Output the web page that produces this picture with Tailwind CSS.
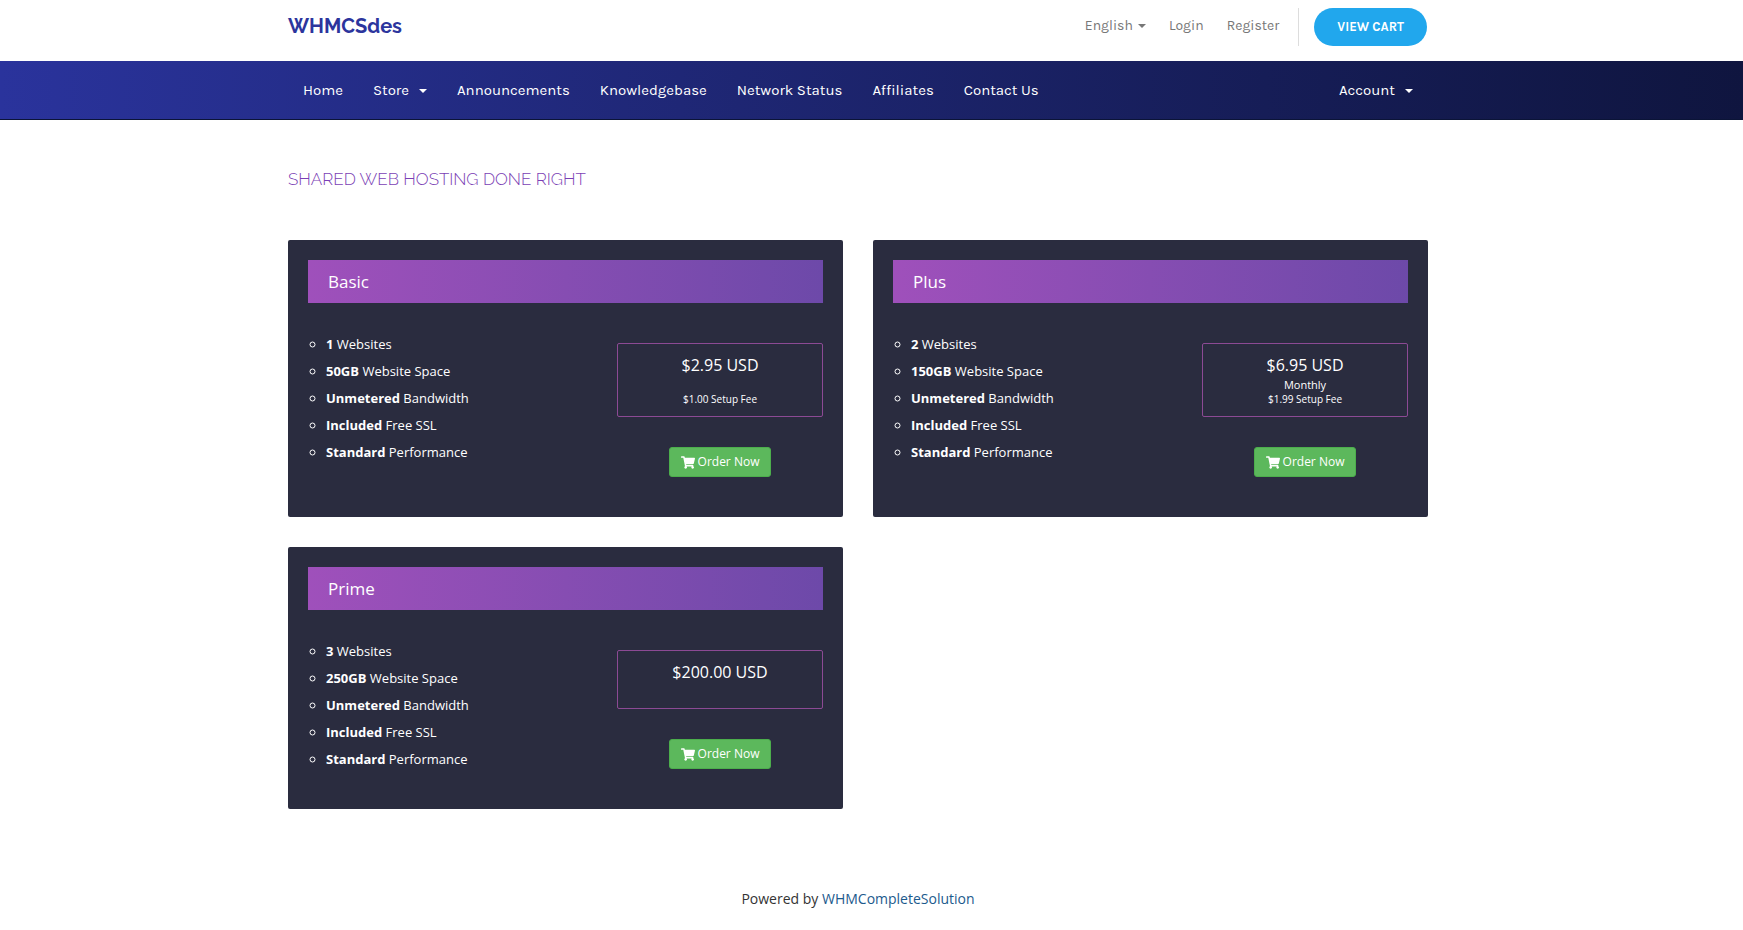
<!DOCTYPE html>
<html lang="en">
<head>
  <meta charset="UTF-8" />
  <meta name="viewport" content="width=device-width, initial-scale=1.0"/>
  <title>WHMCSdes - Shared Web Hosting</title>
  <script src="https://cdn.jsdelivr.net/npm/@tailwindcss/browser@4"></script>
</head>
<body class="bg-white font-['Open_Sans',sans-serif] text-sm text-[#333]">
  <svg class="hidden">
    <symbol id="cart" viewBox="0 0 576 512">
      <path fill="currentColor" d="M528.12 301.319l47.273-208C578.806 78.301 567.391 64 551.99 64H159.208l-9.166-44.81C147.758 8.021 137.93 0 126.529 0H24C10.745 0 0 10.745 0 24v16c0 13.255 10.745 24 24 24h69.883l70.248 343.435C147.325 417.1 136 435.222 136 456c0 30.928 25.072 56 56 56s56-25.072 56-56c0-15.674-6.447-29.835-16.824-40h209.647C430.447 426.165 424 440.326 424 456c0 30.928 25.072 56 56 56s56-25.072 56-56c0-22.172-12.888-41.332-31.579-50.405l5.517-24.276c3.413-15.018-8.002-29.319-23.403-29.319H218.117l-6.545-32h293.145c11.206 0 20.92-7.754 23.403-18.681z"/>
    </symbol>
  </svg>

  <!-- Header -->
  <header class="pr-[27px]">
    <div class="mx-auto flex max-w-[1140px] items-start justify-between pt-2 pb-[15px]">
      <a href="#" class="pt-1 font-[Raleway,Lato,sans-serif] text-[20px] leading-7 font-bold text-[#2c359d]">WHMCSdes</a>
      <div class="flex items-center pr-px font-[Karla,Roboto,sans-serif] text-[14px] text-[#777]">
        <div class="flex items-center gap-[23px] pr-[19px] pb-0.5">
          <button class="flex items-center gap-[5px]">English
            <span class="border-x-4 border-t-4 border-x-transparent border-t-current"></span>
          </button>
          <a href="#">Login</a>
          <a href="#">Register</a>
        </div>
        <div class="border-l border-[#ddd] pl-[15px]">
          <a href="#" class="flex h-[38px] items-center rounded-full bg-[#21a7ed] px-[23px] text-[13px] font-bold text-white">VIEW CART</a>
        </div>
      </div>
    </div>
  </header>

  <!-- Main menu -->
  <nav class="border-b border-[#0b1437] bg-linear-to-r from-[#2a339c] to-[#0f153f] pr-[27px] font-[Karla,Roboto,sans-serif] text-[15px] text-white">
    <div class="mx-auto flex h-[58px] max-w-[1140px] items-center justify-between px-[15px] pt-0.5">
      <div class="flex items-center gap-[30px]">
        <a href="#">Home</a>
        <button class="flex items-center gap-2.5">Store
          <span class="border-x-4 border-t-4 border-x-transparent border-t-current"></span>
        </button>
        <a href="#">Announcements</a>
        <a href="#">Knowledgebase</a>
        <a href="#">Network Status</a>
        <a href="#">Affiliates</a>
        <a href="#">Contact Us</a>
      </div>
      <button class="flex items-center gap-2.5">Account
        <span class="border-x-4 border-t-4 border-x-transparent border-t-current"></span>
      </button>
    </div>
  </nav>

  <!-- Plans -->
  <main class="pr-[27px]">
    <div class="mx-auto max-w-[1140px]">
      <h1 class="pt-[45px] pb-[47px] font-[Raleway,Lato,sans-serif] text-[17px] leading-7 font-light text-[#7b3fb5]">SHARED WEB HOSTING DONE RIGHT</h1>

      <div class="grid grid-cols-2 items-start gap-[30px] text-white">
        <section class="rounded-xs bg-[#2a2c3f] px-5 pt-5 pb-10">
          <h2 class="bg-linear-to-r from-[#9f50bb] to-[#6d49a9] px-5 py-2 text-[17px] leading-[27px]">Basic</h2>
          <div class="flex justify-between pt-8">
            <ul class="ml-[18px] list-[circle] space-y-2 text-[13px] leading-[19px]">
              <li><b>1</b> Websites</li>
              <li><b>50GB</b> Website Space</li>
              <li><b>Unmetered</b> Bandwidth</li>
              <li><b>Included</b> Free SSL</li>
              <li><b>Standard</b> Performance</li>
            </ul>
            <div class="mt-2 flex w-2/5 flex-col items-center gap-[30px]">
              <div class="w-full rounded-xs border border-[#8c4a94] py-[9px] text-center">
                <p class="text-[16px] leading-6">$2.95 USD</p>
                <p class="h-[15px]"></p>
                <p class="text-[10px] leading-[15px]">$1.00 Setup Fee</p>
              </div>
              <button class="flex h-[30px] items-center gap-[3px] rounded-[3px] border border-[#4cae4c] bg-[#5cb85c] px-[11px] text-[12px]">
                <svg class="h-[13px] w-3.5"><use href="#cart"/></svg>Order Now
              </button>
            </div>
          </div>
        </section>

        <section class="rounded-xs bg-[#2a2c3f] px-5 pt-5 pb-10">
          <h2 class="bg-linear-to-r from-[#9f50bb] to-[#6d49a9] px-5 py-2 text-[17px] leading-[27px]">Plus</h2>
          <div class="flex justify-between pt-8">
            <ul class="ml-[18px] list-[circle] space-y-2 text-[13px] leading-[19px]">
              <li><b>2</b> Websites</li>
              <li><b>150GB</b> Website Space</li>
              <li><b>Unmetered</b> Bandwidth</li>
              <li><b>Included</b> Free SSL</li>
              <li><b>Standard</b> Performance</li>
            </ul>
            <div class="mt-2 flex w-2/5 flex-col items-center gap-[30px]">
              <div class="w-full rounded-xs border border-[#8c4a94] py-[9px] text-center">
                <p class="text-[16px] leading-6">$6.95 USD</p>
                <p class="text-[11px] leading-[15px]">Monthly</p>
                <p class="text-[10px] leading-[15px]">$1.99 Setup Fee</p>
              </div>
              <button class="flex h-[30px] items-center gap-[3px] rounded-[3px] border border-[#4cae4c] bg-[#5cb85c] px-[11px] text-[12px]">
                <svg class="h-[13px] w-3.5"><use href="#cart"/></svg>Order Now
              </button>
            </div>
          </div>
        </section>

        <section class="rounded-xs bg-[#2a2c3f] px-5 pt-5 pb-10">
          <h2 class="bg-linear-to-r from-[#9f50bb] to-[#6d49a9] px-5 py-2 text-[17px] leading-[27px]">Prime</h2>
          <div class="flex justify-between pt-8">
            <ul class="ml-[18px] list-[circle] space-y-2 text-[13px] leading-[19px]">
              <li><b>3</b> Websites</li>
              <li><b>250GB</b> Website Space</li>
              <li><b>Unmetered</b> Bandwidth</li>
              <li><b>Included</b> Free SSL</li>
              <li><b>Standard</b> Performance</li>
            </ul>
            <div class="mt-2 flex w-2/5 flex-col items-center gap-[30px]">
              <div class="w-full rounded-xs border border-[#8c4a94] py-[9px] text-center">
                <p class="text-[16px] leading-6">$200.00 USD</p>
                <p class="h-[15px]"></p>
              </div>
              <button class="flex h-[30px] items-center gap-[3px] rounded-[3px] border border-[#4cae4c] bg-[#5cb85c] px-[11px] text-[12px]">
                <svg class="h-[13px] w-3.5"><use href="#cart"/></svg>Order Now
              </button>
            </div>
          </div>
        </section>
      </div>
    </div>
  </main>

  <footer class="pt-20 pr-[27px] pb-5 text-center text-[14px] leading-5">
    Powered by <a href="#" class="text-[#1c5a8d]">WHMCompleteSolution</a>
  </footer>
</body>
</html>
